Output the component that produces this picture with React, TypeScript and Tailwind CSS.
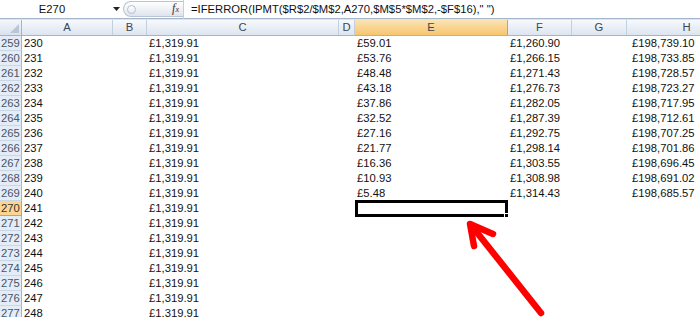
import React from 'react';

// column widths in px, taken from the sheet header
const cols = [
  { key: 'A', w: 'w-[91px]', pad: 'pl-[2px]' },
  { key: 'B', w: 'w-[34px]', pad: 'pl-[2px]' },
  { key: 'C', w: 'w-[192px]', pad: 'pl-[2px]' },
  { key: 'D', w: 'w-[16px]', pad: 'pl-[2px]' },
  { key: 'E', w: 'w-[153px]', pad: 'pl-[2px]' },
  { key: 'F', w: 'w-[64px]', pad: 'pl-[2px]' },
  { key: 'G', w: 'w-[55px]', pad: 'pl-[2px]' },
  { key: 'H', w: 'w-[120px]', pad: 'pl-[5px]' },
];

const interest = ['£59.01', '£53.76', '£48.48', '£43.18', '£37.86', '£32.52', '£27.16', '£21.77', '£16.36', '£10.93', '£5.48'];
const principal = ['£1,260.90', '£1,266.15', '£1,271.43', '£1,276.73', '£1,282.05', '£1,287.39', '£1,292.75', '£1,298.14', '£1,303.55', '£1,308.98', '£1,314.43'];
const balance = ['£198,739.10', '£198,733.85', '£198,728.57', '£198,723.27', '£198,717.95', '£198,712.61', '£198,707.25', '£198,701.86', '£198,696.45', '£198,691.02', '£198,685.57'];

const rows = Array.from({ length: 19 }, (_, i) => ({
  num: 259 + i,
  A: String(230 + i),
  B: '',
  C: '£1,319.91',
  D: '',
  E: interest[i] ?? '',
  F: principal[i] ?? '',
  G: '',
  H: balance[i] ?? '',
}));

function FormulaBar() {
  return (
    <div className="flex h-[19px] items-center border-b border-[#a5b7cd] bg-white">
      <div className="flex w-[104px] justify-center">E270</div>
      <div className="flex w-[19px] justify-center pl-[6px]">
        <svg width="7" height="4" viewBox="0 0 7 4">
          <path d="M0 0h7L3.5 4z" fill="#222" />
        </svg>
      </div>
      <div className="flex h-[16px] w-[60px] items-center justify-between rounded-l-full border border-r-0 border-[#b9c5d4] bg-gradient-to-b from-[#ffffff] to-[#dfe5ee] pl-[3px] pr-[4px]">
        <div className="h-[9px] w-[9px] rounded-full border border-[#b5bfcc] bg-gradient-to-b from-white to-[#e6ebf2]" />
        <span className="font-['Liberation_Serif',serif] text-[12px] italic text-[#333]">
          f<span className="text-[8px]">x</span>
        </span>
      </div>
      <div className="h-[19px] w-px bg-[#c5cfdb]" />
      <div className="whitespace-pre pl-[7px]">=IFERROR(IPMT($R$2/$M$2,A270,$M$5*$M$2,-$F$16)," ")</div>
    </div>
  );
}

function HeaderRow() {
  return (
    <div className="flex h-[16px] border-b border-[#9eb6ce]">
      <div className="relative w-[22px] shrink-0 border-r border-[#9eb6ce] bg-gradient-to-b from-[#f4f7fb] to-[#d9e2ee]">
        <svg className="absolute bottom-[2px] right-[2px]" width="9" height="9" viewBox="0 0 9 9">
          <path d="M9 0V9H0z" fill="#b8c6d8" />
        </svg>
      </div>
      {cols.map(c => (
        <div
          key={c.key}
          className={`${c.w} flex shrink-0 items-center justify-center border-r ${
            c.key === 'E'
              ? 'border-[#f29536] bg-gradient-to-b from-[#fbe3b4] to-[#f6c66d]'
              : 'border-[#c3cfdd] bg-gradient-to-b from-[#f7f9fc] to-[#dde5f0]'
          } text-[#3d4654]`}
        >
          {c.key}
        </div>
      ))}
    </div>
  );
}

export default function App() {
  return (
    <div className="relative h-[317px] w-[700px] overflow-hidden bg-white font-['Liberation_Sans',Arial,sans-serif] text-[11.25px] leading-[15px] text-[#111]">
      <FormulaBar />
      <div className="h-[1px] bg-[#dbe3ee]" />
      <HeaderRow />
      {rows.map(r => (
        <div key={r.num} className="flex h-[15px]">
          <div
            className={`flex w-[22px] shrink-0 items-center justify-center border-r border-b ${
              r.num === 270
                ? 'border-[#f29536] bg-[#fcd590] text-[#333]'
                : 'border-r-[#9eb6ce] border-b-[#c9d6e6] bg-[#e4ecf7] text-[#4a5565]'
            }`}
          >
            {r.num}
          </div>
          {cols.map(c => {
            const selected = r.num === 270 && c.key === 'E';
            return (
              <div
                key={c.key}
                className={`${c.w} ${c.pad} relative flex shrink-0 items-center whitespace-nowrap ${
                  selected ? '-mt-[1px] h-[17px] border-[3px] border-black' : ''
                }`}
              >
                {r[c.key as keyof typeof r]}
                {selected && <div className="absolute -bottom-[4px] -right-[4px] h-[5px] w-[5px] border border-white bg-black" />}
              </div>
            );
          })}
        </div>
      ))}
      <svg className="pointer-events-none absolute left-0 top-0" width="700" height="317" viewBox="0 0 700 317">
        <g stroke="#ff0000" strokeWidth="6.5" strokeLinecap="round" strokeLinejoin="round" fill="none">
          <path d="M541 313L471 225" />
          <path d="M474 246L470 224L493 234" />
        </g>
      </svg>
    </div>
  );
}
